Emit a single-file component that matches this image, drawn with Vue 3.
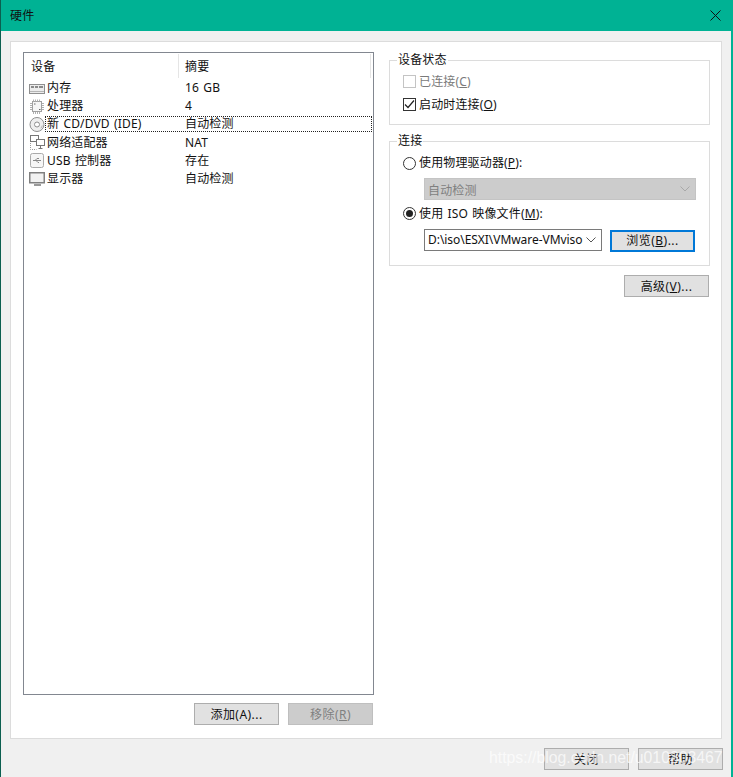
<script setup>
const rows = [
  { icon: 'mem', name: '内存', sum: '16 GB' },
  { icon: 'cpu', name: '处理器', sum: '4' },
  { icon: 'cd', name: '新 CD/DVD (IDE)', sum: '自动检测', focus: true },
  { icon: 'net', name: '网络适配器', sum: 'NAT' },
  { icon: 'usb', name: 'USB 控制器', sum: '存在' },
  { icon: 'mon', name: '显示器', sum: '自动检测' },
]
</script>

<template>
  <div class="win">
    <div class="title">
      <span>硬件</span>
      <svg class="close" width="11" height="11" viewBox="0 0 11 11"><path d="M.5.5l10 10M10.500.5l-10 10" stroke="#111" fill="none"/></svg>
    </div>
    <div class="main">
      <div class="panel">
        <div class="left">
          <div class="list">
            <div class="head">
              <div class="h1">设备</div>
              <div class="h2">摘要</div>
            </div>
            <div v-for="r in rows" :key="r.name" class="row">
              <svg class="ico" width="17" height="17" viewBox="0 0 17 17" fill="none" stroke="#8f8f8f">
                <template v-if="r.icon === 'mem'">
                  <rect x=".5" y="4.500" width="15" height="9" fill="#ececec"/>
                  <path d="M2 7h3M6 7h3M10 7h4" stroke="#8a8a8a" stroke-width="2"/>
                  <path d="M1 11.500h14" stroke="#b5b5b5"/>
                </template>
                <template v-else-if="r.icon === 'cpu'">
                  <rect x="3.500" y="3.500" width="9" height="10" fill="#f6f6f6" stroke="#a0a0a0"/>
                  <path d="M4.500 1.500v2M6.500 1.500v2M8.500 1.500v2M10.500 1.500v2M4.500 14v2M6.500 14v2M8.500 14v2M10.500 14v2M1 5.500h2M1 7.500h2M1 9.500h2M1 11.500h2M13 5.500h2M13 7.500h2M13 9.500h2M13 11.500h2" stroke="#b0b0b0"/>
                  <path d="M5 6h1.500M10 11.500h1.500" stroke="#666"/>
                </template>
                <template v-else-if="r.icon === 'cd'">
                  <circle cx="8" cy="8.500" r="7" fill="#eee" stroke="#8f8f8f"/>
                  <circle cx="8" cy="8.500" r="2.500" fill="#fff" stroke="#8f8f8f"/>
                  <path d="M11.800 12.300a5.400 5.400 0 0 0 1.400-2.800" stroke="#b5b5b5"/>
                </template>
                <template v-else-if="r.icon === 'net'">
                  <rect x="1.500" y="1.500" width="8" height="6" fill="#fff" stroke="#777"/>
                  <rect x="7.500" y="5.500" width="8" height="6" fill="#fff" stroke="#777"/>
                  <path d="M11.500 12v2M9.500 14.500h4" stroke="#777"/>
                  <path d="M1.500 9v6.500h6" stroke="#999" stroke-dasharray="1 1"/>
                </template>
                <template v-else-if="r.icon === 'usb'">
                  <rect x="1.500" y="1.500" width="13" height="14" rx="2" fill="#f6f6f6" stroke="#aaa"/>
                  <path d="M4 8.500h8M6 8.500l2-2h2M7 8.500l2 2h1" stroke="#888"/>
                </template>
                <template v-else>
                  <rect x=".75" y="1.750" width="14.500" height="10" fill="#f2f2f2" stroke="#808080" stroke-width="1.500"/>
                  <path d="M5 14h7" stroke="#999" stroke-width="2"/>
                </template>
              </svg>
              <div class="name" :class="{ focus: r.focus }">{{ r.name }}</div>
              <div class="sum">{{ r.sum }}</div>
            </div>
          </div>
          <div class="left-btns">
            <div class="btn">添加(A)...</div>
            <div class="btn off">移除(<u>R</u>)</div>
          </div>
        </div>
        <div class="right">
          <fieldset class="grp g1">
            <legend>设备状态</legend>
            <div class="line dim">
              <span class="cb dis"></span><span>已连接(<u>C</u>)</span>
            </div>
            <div class="line">
              <span class="cb"><svg width="11" height="11" viewBox="0 0 11 11"><path d="M1 5.500l3 3 6-7" stroke="#222" fill="none" stroke-width="1.200"/></svg></span><span>启动时连接(<u>O</u>)</span>
            </div>
          </fieldset>
          <fieldset class="grp g2">
            <legend>连接</legend>
            <div class="line tall">
              <span class="rb"></span><span>使用物理驱动器(<u>P</u>):</span>
            </div>
            <div class="sel dis">
              <span>自动检测</span>
              <svg width="10" height="6" viewBox="0 0 10 6"><path d="M.5.500l4.500 4.500 4.500-4.500" stroke="#a8a8a8" fill="none"/></svg>
            </div>
            <div class="line tall">
              <span class="rb on"></span><span class="low">使用 ISO 映像文件(<u>M</u>):</span>
            </div>
            <div class="file">
              <div class="sel combo">
                <span class="path">D:\iso\ESXI\VMware-VMvisor</span>
                <svg width="10" height="6" viewBox="0 0 10 6"><path d="M.5.500l4.500 4.500 4.500-4.500" stroke="#555" fill="none"/></svg>
              </div>
              <div class="btn def">浏览(<u>B</u>)...</div>
            </div>
          </fieldset>
          <div class="adv"><div class="btn">高级(<u>V</u>)...</div></div>
        </div>
      </div>
      <div class="foot">
        <div class="btn">关闭</div>
        <div class="btn">帮助</div>
      </div>
    </div>
    <div class="mark">https://blog.csdn.net/u010803467</div>
  </div>
</template>

<style scoped>
.win {
  position: relative;
  width: 733px;
  height: 777px;
  box-sizing: border-box;
  display: flex;
  flex-direction: column;
  background: #f0f0f0;
  border-left: 1px solid #0b5f50;
  border-right: 2px solid #00b294;
  overflow: hidden;
  font: 12px/16px "Noto Sans", "Noto Sans CJK SC", sans-serif;
  letter-spacing: .15px;
  word-spacing: 1px;
  color: #111;
}
.title {
  height: 31px;
  flex: none;
  background: #00b294;
  display: flex;
  align-items: center;
  justify-content: space-between;
  padding: 0 10px 0 9px;
}
.main {
  flex: 1;
  display: flex;
  flex-direction: column;
  padding: 10px 9px 0;
}
.panel {
  height: 698px;
  box-sizing: border-box;
  background: #fff;
  border: 1px solid #dcdcdc;
  padding: 10px 10px 12px 12px;
  display: flex;
  gap: 15px;
}
.left {
  width: 351px;
  display: flex;
  flex-direction: column;
}
.list {
  height: 643px;
  box-sizing: border-box;
  border: 1px solid #828790;
  flex: none;
}
.head {
  height: 26px;
  display: flex;
  align-items: center;
}
.h1 {
  width: 147px;
  height: 24px;
  line-height: 26px;
  padding-left: 7px;
  border-right: 1px solid #e5e5e5;
}
.h2 {
  flex: 1;
  height: 24px;
  padding-left: 6px;
  margin-right: 2px;
  line-height: 26px;
  border-right: 1px solid #e5e5e5;
}
.row {
  height: 18.2px;
  display: flex;
  align-items: center;
  padding-left: 5px;
}
.ico { flex: none; width: 17px; }
.name {
  width: 139px;
  padding-left: 1px;
  white-space: nowrap;
  box-sizing: border-box;
  height: 16px;
}
.sum { flex: 1; }
.name.focus { position: relative; }
.name.focus::after {
  content: "";
  position: absolute;
  left: -1px;
  top: 0;
  width: 327px;
  height: 16px;
  box-sizing: border-box;
  border: 1px dotted #222;
}
.left-btns {
  margin-top: 8px;
  display: flex;
  justify-content: flex-end;
  gap: 9px;
  padding-right: 1px;
}
.btn {
  width: 85px;
  height: 22px;
  box-sizing: border-box;
  background: #e1e1e1;
  border: 1px solid #adadad;
  text-align: center;
  line-height: 22px;
  letter-spacing: .45px;
}
.btn.off {
  background: #cccccc;
  border-color: #bfbfbf;
  color: #808080;
}
.btn.def {
  border: 2px solid #0078d7;
  line-height: 18px;
  margin-top: 1px;
}
.right {
  width: 321px;
  padding-top: 1px;
  display: flex;
  flex-direction: column;
}
.grp {
  margin: 0;
  border: 1px solid #dcdcdc;
  padding: 3px 0 0 13px;
  box-sizing: border-box;
  min-width: 0;
}
.grp legend {
  margin-left: -6px;
  padding: 0 1px;
  line-height: 14px;
}
.g1 { height: 72px; flex: none; }
.g2 { height: 132px; margin-top: 9px; flex: none; }
.line {
  height: 23px;
  display: flex;
  align-items: center;
  gap: 3px;
}
.line.tall { height: 24px; }
.low { margin-top: 2px; }
.dim { color: #7a7a7a; }
.cb {
  width: 13px;
  height: 13px;
  box-sizing: border-box;
  border: 1px solid #333;
  display: flex;
  align-items: center;
  justify-content: center;
}
.cb.dis { border-color: #c4c4c4; }
.rb {
  width: 13px;
  height: 13px;
  box-sizing: border-box;
  border: 1px solid #333;
  border-radius: 50%;
  position: relative;
}
.rb.on::after {
  content: "";
  position: absolute;
  inset: 2px;
  border-radius: 50%;
  background: #222;
}
.sel {
  height: 22px;
  box-sizing: border-box;
  display: flex;
  align-items: center;
  justify-content: space-between;
  padding: 0 5px 0 3px;
}
.sel.dis {
  width: 272px;
  margin: 3px 0 1px 21px;
  background: #cccccc;
  border: 1px solid #c4c4c4;
  color: #7f7f7f;
}
.sel.dis span { margin-top: 3px; }
.file {
  display: flex;
  gap: 8px;
  margin: 4px 0 0 21px;
  align-items: flex-start;
}
.combo {
  width: 178px;
  background: #fff;
  border: 1px solid #7a7a7a;
  letter-spacing: -.05px;
}
.path {
  width: 155px;
  overflow: hidden;
  white-space: nowrap;
}
.adv {
  margin-top: 9px;
  display: flex;
  justify-content: flex-end;
  padding-right: 1px;
}
.foot {
  margin-top: 9px;
  margin-right: -1px;
  display: flex;
  justify-content: flex-end;
  gap: 9px;
}
.close { flex: none; }
.mark {
  position: absolute;
  left: 488px;
  top: 749px;
  font: 15.8px/18px "Liberation Sans", sans-serif;
  letter-spacing: 0;
  word-spacing: 0;
  color: rgba(255, 255, 255, .72);
  white-space: nowrap;
  pointer-events: none;
}
</style>
